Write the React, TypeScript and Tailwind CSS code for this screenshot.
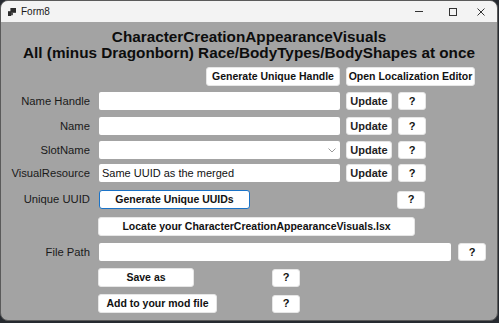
const font = { fontFamily: '"Liberation Sans", Arial, sans-serif' }

function Btn({ w, children, focused }: { w: string; children: React.ReactNode; focused?: boolean }) {
  return (
    <button
      className={`${w} h-[19px] shrink-0 rounded-[3px] bg-white text-[10.5px] font-bold text-[#111] leading-none ${
        focused ? 'border border-[#1a73c8]' : 'border border-[#e6e6e6]'
      }`}
    >
      {children}
    </button>
  )
}

function Help({ className = '' }: { className?: string }) {
  return (
    <button className={`w-[28px] h-[18px] shrink-0 rounded-[3px] bg-white border border-[#e6e6e6] text-[11px] font-bold text-[#111] leading-none ${className}`}>
      ?
    </button>
  )
}

function Label({ children }: { children: React.ReactNode }) {
  return <div className="w-[89px] shrink-0 text-right text-[11.25px] text-[#1a1a1a]">{children}</div>
}

function Field({ w, value, select }: { w: string; value?: string; select?: boolean }) {
  return (
    <div className={`${w} h-[18px] ml-[9px] shrink-0 bg-white rounded-[2px] flex items-center px-[3px] text-[11px] text-[#111]`}>
      <span className="flex-1">{value}</span>
      {select && (
        <svg width="8" height="5" viewBox="0 0 8 5" className="mr-[1px]">
          <path d="M0.5 0.5 L4 4 L7.5 0.5" stroke="#9a9a9a" strokeWidth="1" fill="none" />
        </svg>
      )}
    </div>
  )
}

function InputRow({ label, value, select, mt }: { label: string; value?: string; select?: boolean; mt: string }) {
  return (
    <div className={`flex items-center ${mt}`}>
      <Label>{label}</Label>
      <Field w="w-[241px]" value={value} select={select} />
      <button className="ml-[6px] w-[46px] h-[18px] shrink-0 rounded-[3px] bg-white border border-[#e6e6e6] text-[11px] font-bold text-[#222] leading-none">
        Update
      </button>
      <Help className="ml-[6px]" />
    </div>
  )
}

export default function App() {
  return (
    <div className="w-[499px] h-[323px] bg-[#262a30] overflow-hidden" style={font}>
      <div className="w-[498px] h-[321px] rounded-[8px] overflow-hidden border border-[#5a5a5a] flex flex-col bg-[#a3a3a3]">
        {/* title bar */}
        <div className="h-[21px] shrink-0 bg-[#f3f3f3] flex items-center">
          <svg width="8" height="8" viewBox="0 0 10 10" className="ml-[7px]">
            <rect x="3" y="0" width="7" height="6" fill="#2b2b2b" />
            <rect x="0" y="4" width="4" height="6" fill="#2b2b2b" />
            <rect x="4" y="6" width="2" height="3" fill="#2b2b2b" />
          </svg>
          <span className="ml-[5px] text-[10px] text-[#1a1a1a]">Form8</span>
          <div className="flex-1" />
          <div className="w-[45px] flex justify-center">
            <div className="w-[8px] h-[1px] bg-[#333]" />
          </div>
          <div className="w-[24px] flex justify-center">
            <div className="w-[8px] h-[8px] border border-[#333]" />
          </div>
          <div className="w-[32px] flex justify-center">
            <svg width="8" height="8" viewBox="0 0 8 8">
              <path d="M0.5 0.5 L7.5 7.5 M7.5 0.5 L0.5 7.5" stroke="#333" strokeWidth="1" />
            </svg>
          </div>
        </div>

        {/* body */}
        <div className="flex-1 pt-[7px]">
          <div className="text-center font-bold text-[15.3px] leading-[16px] text-[#0d0d0d]">
            <div>CharacterCreationAppearanceVisuals</div>
            <div>All (minus Dragonborn) Race/BodyTypes/BodyShapes at once</div>
          </div>

          <div className="flex mt-[6px] pl-[205px] gap-[6px]">
            <Btn w="w-[134px]">Generate Unique Handle</Btn>
            <Btn w="w-[129px]">Open Localization Editor</Btn>
          </div>

          <InputRow label="Name Handle" mt="mt-[6px]" />
          <InputRow label="Name" mt="mt-[7px]" />
          <InputRow label="SlotName" select mt="mt-[6px]" />
          <InputRow label="VisualResource" value="Same UUID as the merged" mt="mt-[5px]" />

          <div className="flex items-center mt-[8px]">
            <Label>Unique UUID</Label>
            <div className="ml-[9px] flex">
              <Btn w="w-[151px]" focused>
                Generate Unique UUIDs
              </Btn>
            </div>
            <Help className="ml-[147px]" />
          </div>

          <div className="flex mt-[8px] pl-[97px]">
            <Btn w="w-[317px]">Locate your CharacterCreationAppearanceVisuals.lsx</Btn>
          </div>

          <div className="flex items-center mt-[7px]">
            <Label>File Path</Label>
            <Field w="w-[352px]" />
            <Help className="ml-[7px]" />
          </div>

          <div className="flex items-center mt-[7px] pl-[97px]">
            <Btn w="w-[96px]">Save as</Btn>
            <Help className="ml-[78px]" />
          </div>

          <div className="flex items-center mt-[7px] pl-[97px]">
            <Btn w="w-[119px]">Add to your mod file</Btn>
            <Help className="ml-[55px]" />
          </div>
        </div>
      </div>
    </div>
  )
}
